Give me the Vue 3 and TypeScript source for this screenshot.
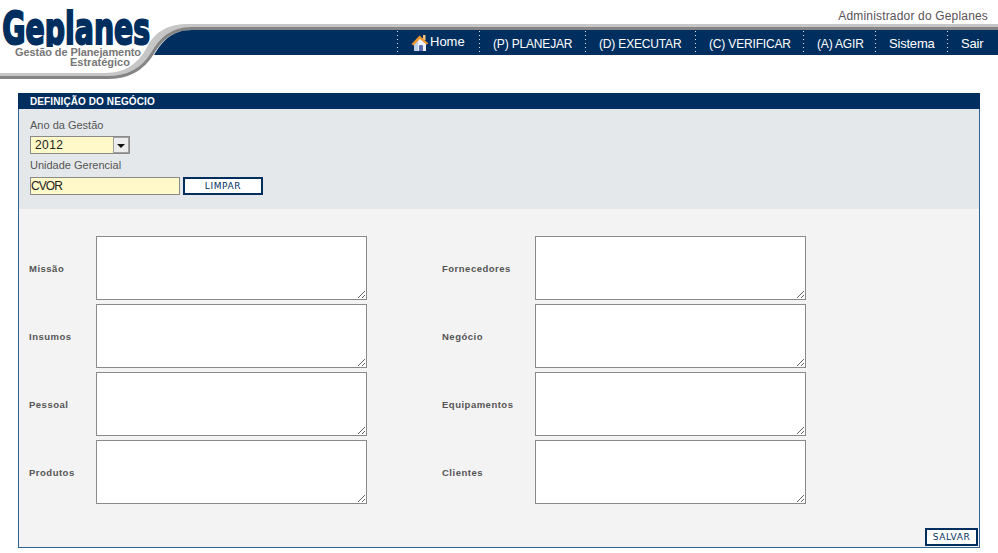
<script setup lang="ts">
import { ref } from 'vue'

const navItems: string[] = ['(P) PLANEJAR', '(D) EXECUTAR', '(C) VERIFICAR', '(A) AGIR', 'Sistema', 'Sair']
const fields: string[] = ['Missão', 'Fornecedores', 'Insumos', 'Negócio', 'Pessoal', 'Equipamentos', 'Produtos', 'Clientes']
const year = ref('2012')
const unit = ref('CVOR')
</script>

<template>
  <div class="page">
    <header class="header">
      <svg class="swoosh" viewBox="0 0 998 80" width="998" height="80" aria-hidden="true">
        <path d="M998 24H188C165 24 154 34 147 47C139 62 127 73 105 73H0V79H108C130 79 145 68 153 55C161 41 172 30 192 30H998Z" fill="#c6c6c6" />
        <path d="M998 28.5H191C171 28.5 160 40 152 54C144 67 130 77.5 108 77.5H0" fill="none" stroke="#858585" stroke-width="3" />
        <path d="M998 30H192C172 30 162 41 154 55H998Z" fill="#002f5f" />
      </svg>
      <div class="logo">
        <div class="logo-name">Geplanes</div>
        <div class="logo-sub">Gestão de Planejamento</div>
        <div class="logo-sub logo-sub-2">Estratégico</div>
      </div>
      <div class="user">Administrador do Geplanes</div>
      <nav class="nav">
        <a class="nav-item nav-home">
          <svg class="home-icon" viewBox="0 0 18 18" width="18" height="18" aria-hidden="true">
            <path d="M3 9L9 4L15 9V17H3Z" fill="#eef1f8" />
            <path d="M3 9.5V17H7V7Z" fill="#bcd0ea" />
            <path d="M8 17V12C8 10.6 12 10.6 12 12V17Z" fill="#5a6bb0" />
            <rect x="12" y="1" width="2.5" height="5" fill="#f7c27a" />
            <path d="M0.5 10L8.5 1.5L17.5 9.5L15.5 10.5L9 5L2.5 11.5Z" fill="#f2962f" />
          </svg>
          <span>Home</span>
        </a>
        <a v-for="item in navItems" :key="item" class="nav-item">{{ item }}</a>
      </nav>
    </header>

    <main class="panel">
      <h1 class="panel-title">DEFINIÇÃO DO NEGÓCIO</h1>
      <section class="filters">
        <label class="filter-label">Ano da Gestão</label>
        <div class="select">
          <select v-model="year" class="select-input">
            <option>2012</option>
          </select>
          <span class="select-btn"><i class="arrow"></i></span>
        </div>
        <label class="filter-label filter-label-2">Unidade Gerencial</label>
        <div class="unit-row">
          <input v-model="unit" class="unit-input" type="text" />
          <button class="btn btn-clear" type="button">LIMPAR</button>
        </div>
      </section>
      <section class="body">
        <div class="grid">
          <div v-for="field in fields" :key="field" class="field">
            <label class="field-label">{{ field }}</label>
            <textarea class="field-input"></textarea>
          </div>
        </div>
        <div class="actions">
          <button class="btn btn-save" type="button">SALVAR</button>
        </div>
      </section>
    </main>
  </div>
</template>

<style>
html, body { margin: 0; background: #fff; }
</style>

<style scoped>
.page {
  width: 998px;
  height: 553px;
  overflow: hidden;
  background: #fff;
  font-family: "Liberation Sans", Arial, sans-serif;
}
.header {
  position: relative;
  height: 93px;
  display: flex;
  flex-direction: column;
  align-items: flex-end;
  box-sizing: border-box;
}
.swoosh { position: absolute; left: 0; top: 0; }
.logo { position: absolute; left: 0; top: 0; width: 170px; height: 80px; }
.logo-name {
  position: absolute;
  left: 1px;
  top: 8px;
  height: 39px;
  padding: 0 3px 0 2px;
  overflow: hidden;
  font-family: "DejaVu Sans", sans-serif;
  font-size: 45px;
  line-height: 42px;
  font-weight: 700;
  color: #002f5f;
  -webkit-text-stroke: 2.2px #002f5f;
  transform: scaleX(0.63);
  transform-origin: left top;
  white-space: nowrap;
}
.logo-sub {
  position: absolute;
  left: 15px;
  top: 47px;
  font-size: 11px;
  line-height: 10px;
  font-weight: 700;
  letter-spacing: -0.08px;
  color: #777;
  white-space: nowrap;
}
.logo-sub-2 { left: 70px; top: 57px; letter-spacing: 0; }
.user {
  position: relative;
  height: 30px;
  padding: 9px 10px 0 0;
  box-sizing: border-box;
  font-size: 12px;
  line-height: 15px;
  letter-spacing: 0.17px;
  color: #5a5258;
}
.nav {
  position: relative;
  display: grid;
  grid-template-columns: 82px 106px 110px 108px 72px 72px 51px;
  height: 25px;
  align-items: stretch;
  box-sizing: border-box;
}
.nav-item {
  display: flex;
  align-items: center;
  padding-left: 14px;
  padding-top: 2px;
  box-sizing: border-box;
  background-image: linear-gradient(#dfe6f0 1px, transparent 1px);
  background-size: 1px 4px;
  background-repeat: repeat-y;
  background-position: 0 1px;
  color: #fff;
  font-size: 12px;
  line-height: 14px;
  letter-spacing: -0.17px;
  white-space: nowrap;
}
.nav-item:nth-last-child(-n+2) { font-size: 13px; letter-spacing: -0.2px; }
.nav-home { font-size: 13px; letter-spacing: 0; gap: 1px; padding-top: 1px; }
.nav-home span { position: relative; top: -1px; }
.home-icon { display: block; }
.panel {
  width: 962px;
  height: 455px;
  margin-left: 18px;
  box-sizing: border-box;
  border: 1px solid #2f6296;
  border-top: 0;
  display: flex;
  flex-direction: column;
  background: #f3f3f3;
}
.panel-title {
  margin: 0 -1px;
  height: 16px;
  padding-left: 12px;
  background: #002f5f;
  color: #fff;
  font-size: 10px;
  line-height: 17px;
  font-weight: 700;
  letter-spacing: 0.1px;
}
.filters {
  height: 100px;
  box-sizing: border-box;
  padding: 9px 11px 0;
  background: #e4e8eb;
}
.filter-label {
  display: block;
  height: 15px;
  font-size: 11px;
  line-height: 14px;
  color: #555;
}
.filter-label-2 { margin-top: 4px; }
.select {
  display: flex;
  width: 100px;
  height: 18px;
  margin-top: 3px;
  box-sizing: border-box;
  border: 1px solid #8a8a8a;
  background: #fff8c8;
}
.select-input {
  appearance: none;
  flex: 1;
  min-width: 0;
  height: 16px;
  border: 0;
  padding: 0 0 0 4px;
  background: transparent;
  font-family: inherit;
  font-size: 12px;
  letter-spacing: 0.4px;
  color: #222;
  outline: none;
}
.select-btn {
  width: 16px;
  display: flex;
  align-items: center;
  justify-content: center;
  background: #ececec;
  border: 1px solid #a0a0a0;
  box-sizing: border-box;
}
.arrow {
  display: block;
  margin-top: 2px;
  width: 0;
  height: 0;
  border-left: 4px solid transparent;
  border-right: 4px solid transparent;
  border-top: 4px solid #111;
}
.unit-row {
  display: flex;
  align-items: center;
  gap: 3px;
  margin-top: 4px;
}
.unit-input {
  width: 150px;
  height: 18px;
  box-sizing: border-box;
  border: 1px solid #8a8a8a;
  background: #fff8c8;
  padding: 0;
  font-family: inherit;
  font-size: 12px;
  letter-spacing: -0.9px;
  color: #222;
  outline: none;
}
.btn {
  box-sizing: border-box;
  border: 2px solid #002f5f;
  background: #fff;
  padding: 0;
  font-family: "DejaVu Sans", Verdana, sans-serif;
  font-size: 9px;
  color: #002f5f;
  letter-spacing: 0.6px;
}
.btn-clear { width: 80px; height: 18px; }
.body {
  flex: 1;
  display: flex;
  flex-direction: column;
  padding: 27px 1px 1px 10px;
}
.grid {
  display: grid;
  grid-template-columns: 346px 364px;
  gap: 4px 67px;
  justify-content: start;
}
.field {
  display: flex;
  align-items: center;
  height: 64px;
}
.field-label {
  width: 67px;
  flex: none;
  font-size: 9.5px;
  font-weight: 700;
  color: #555;
  letter-spacing: 0.5px;
}
.field:nth-child(even) .field-label { width: 93px; }
.field-input {
  width: 271px;
  height: 64px;
  box-sizing: border-box;
  flex: none;
  border: 1px solid #8a8a8a;
  background: #fff;
  padding: 2px;
  margin: 0;
  outline: none;
}
.actions {
  margin-top: auto;
  display: flex;
  justify-content: flex-end;
}
.btn-save { width: 53px; height: 18px; }
</style>
